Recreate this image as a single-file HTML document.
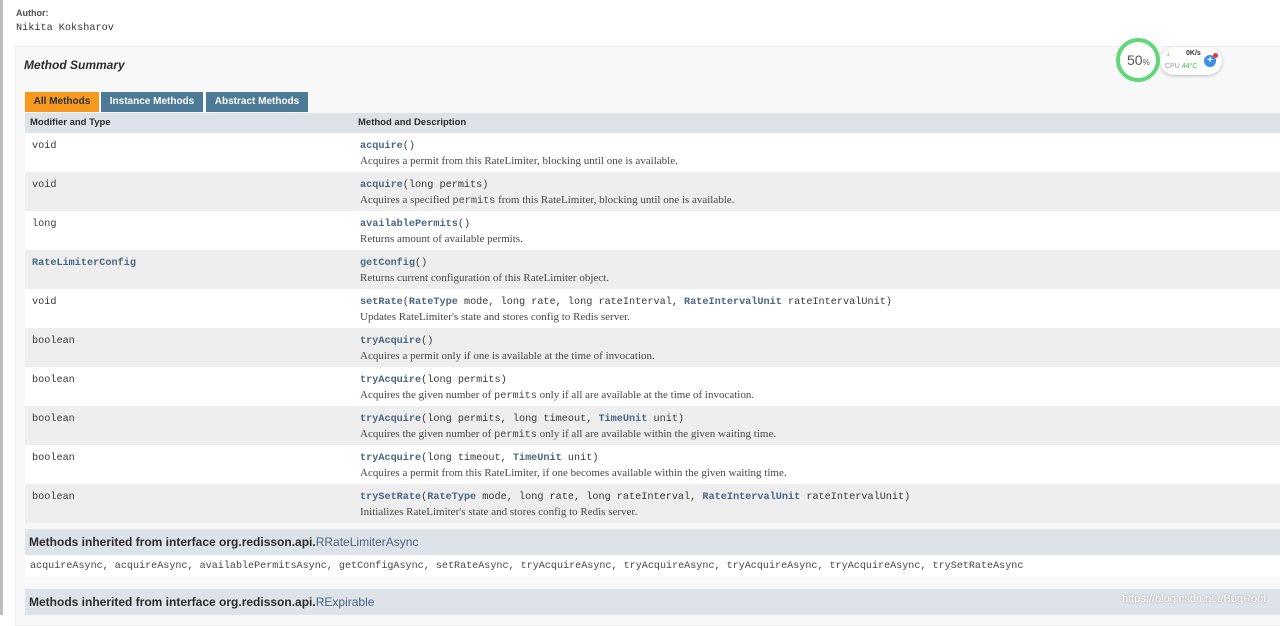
<!DOCTYPE html>
<html><head><meta charset="utf-8"><style>
*{margin:0;padding:0;box-sizing:border-box}
body{width:1280px;height:615px;overflow:hidden;background:#fff;position:relative;font-family:"Liberation Sans",sans-serif;color:#353833}
.lb{position:absolute;left:0;top:0;width:3px;height:615px;background:#bdbdbd}
.mono{font-family:"Liberation Mono","DejaVu Sans Mono",monospace}
.abs{position:absolute}
.box{position:absolute;left:15px;top:46px;width:1270px;height:580px;background:#f8f8f8;border:1px solid #ededed}
.tab{position:absolute;top:92px;height:20px;color:#fff;font-weight:bold;font-size:10px;line-height:20px;text-align:center;white-space:nowrap}
.row{position:absolute;left:25px;width:1255px;height:39px}
.row .t{position:absolute;left:7px;top:8px;font-size:10.2px;color:#353833}
.row .m{position:absolute;left:335px;top:8px;font-size:10.2px;white-space:nowrap;color:#353833}
.row .d{position:absolute;left:335px;top:22px;font-family:"Liberation Serif",serif;font-size:11px;color:#474747;white-space:nowrap}
.row .d .mono{font-size:10.2px}
b.l{color:#4a6782}
.inh{position:absolute;left:25px;width:1255px;height:26px;background:#dee3e9;font-weight:bold;font-size:12px;line-height:26px;padding-left:4px;color:#2c2c2c}
.inh span{color:#4a6782;font-weight:normal}
</style></head><body>
<div class="lb"></div>
<div class="abs" style="left:16px;top:8px;font-size:9px;font-weight:bold;color:#4d4d4d">Author:</div>
<div class="abs mono" style="left:16px;top:23px;font-size:10.2px;color:#353833">Nikita Koksharov</div>
<div class="box"></div>
<div class="abs" style="left:24px;top:58px;font-size:12px;font-weight:bold;font-style:italic;color:#2c2c2c">Method Summary</div>
<div class="tab" style="left:25px;width:74px;background:#f8981d;color:#253441">All Methods</div>
<div class="tab" style="left:101px;width:102px;background:#4d7a97">Instance Methods</div>
<div class="tab" style="left:206px;width:102px;background:#4d7a97">Abstract Methods</div>
<div class="abs" style="left:25px;top:113px;width:1255px;height:20px;background:#dee3e9;font-size:9.5px;font-weight:bold;line-height:20px;color:#2c2c2c"><span style="position:absolute;left:5px">Modifier and Type</span><span style="position:absolute;left:333px">Method and Description</span></div>

<div class="row mono" style="top:133px;background:#fff"><div class="t">void</div><div class="m"><b class="l">acquire</b>()</div><div class="d">Acquires a permit from this RateLimiter, blocking until one is available.</div></div>
<div class="row mono" style="top:172px;background:#eeeeef"><div class="t">void</div><div class="m"><b class="l">acquire</b>(long permits)</div><div class="d">Acquires a specified <span class="mono">permits</span> from this RateLimiter, blocking until one is available.</div></div>
<div class="row mono" style="top:211px;background:#fff"><div class="t">long</div><div class="m"><b class="l">availablePermits</b>()</div><div class="d">Returns amount of available permits.</div></div>
<div class="row mono" style="top:250px;background:#eeeeef"><div class="t"><b class="l">RateLimiterConfig</b></div><div class="m"><b class="l">getConfig</b>()</div><div class="d">Returns current configuration of this RateLimiter object.</div></div>
<div class="row mono" style="top:289px;background:#fff"><div class="t">void</div><div class="m"><b class="l">setRate</b>(<b class="l">RateType</b> mode, long rate, long rateInterval, <b class="l">RateIntervalUnit</b> rateIntervalUnit)</div><div class="d">Updates RateLimiter's state and stores config to Redis server.</div></div>
<div class="row mono" style="top:328px;background:#eeeeef"><div class="t">boolean</div><div class="m"><b class="l">tryAcquire</b>()</div><div class="d">Acquires a permit only if one is available at the time of invocation.</div></div>
<div class="row mono" style="top:367px;background:#fff"><div class="t">boolean</div><div class="m"><b class="l">tryAcquire</b>(long permits)</div><div class="d">Acquires the given number of <span class="mono">permits</span> only if all are available at the time of invocation.</div></div>
<div class="row mono" style="top:406px;background:#eeeeef"><div class="t">boolean</div><div class="m"><b class="l">tryAcquire</b>(long permits, long timeout, <b class="l">TimeUnit</b> unit)</div><div class="d">Acquires the given number of <span class="mono">permits</span> only if all are available within the given waiting time.</div></div>
<div class="row mono" style="top:445px;background:#fff"><div class="t">boolean</div><div class="m"><b class="l">tryAcquire</b>(long timeout, <b class="l">TimeUnit</b> unit)</div><div class="d">Acquires a permit from this RateLimiter, if one becomes available within the given waiting time.</div></div>
<div class="row mono" style="top:484px;background:#eeeeef"><div class="t">boolean</div><div class="m"><b class="l">trySetRate</b>(<b class="l">RateType</b> mode, long rate, long rateInterval, <b class="l">RateIntervalUnit</b> rateIntervalUnit)</div><div class="d">Initializes RateLimiter's state and stores config to Redis server.</div></div>

<div class="inh" style="top:529px">Methods inherited from interface org.redisson.api.<span>RRateLimiterAsync</span></div>
<div class="abs mono" style="left:25px;top:555px;width:1255px;height:22px;background:#fff;font-size:10.1px;line-height:24px;padding-left:5px;color:#474747;white-space:nowrap">acquireAsync, acquireAsync, availablePermitsAsync, getConfigAsync, setRateAsync, tryAcquireAsync, tryAcquireAsync, tryAcquireAsync, tryAcquireAsync, trySetRateAsync</div>
<div class="inh" style="top:589px">Methods inherited from interface org.redisson.api.<span>RExpirable</span></div>
<div class="abs" style="left:1122px;top:593px;font-size:11px;color:#fff;text-shadow:0 0 2px #999">https://blog.csdn.net/BugRoot</div>

<div class="abs" style="left:1160px;top:47px;width:62px;height:28px;border-radius:14px;background:#fff;box-shadow:0 1px 3px rgba(0,0,0,.25)"></div>
<div class="abs" style="left:1116px;top:38px;width:44px;height:44px;border-radius:50%;background:#fff;border:4px solid #5fd878"></div>
<div class="abs" style="left:1127px;top:52px;font-size:14px;color:#555">50<span style="font-size:8px">%</span></div>
<div class="abs" style="left:1166px;top:49px;font-size:8px;color:#3c3">↓</div>
<div class="abs" style="left:1186px;top:50px;font-size:7px;font-weight:bold;color:#333">0K/s</div>
<div class="abs" style="left:1165px;top:63px;font-size:7px;color:#999">CPU <span style="color:#3c3">44°C</span></div>
<div class="abs" style="left:1204px;top:55px;width:12px;height:12px;border-radius:50%;background:#3a8ee6;color:#fff;font-size:10px;line-height:12px;text-align:center;font-weight:bold">+</div>
<div class="abs" style="left:1213px;top:53px;width:5px;height:5px;border-radius:50%;background:#e33"></div>
</body></html>
